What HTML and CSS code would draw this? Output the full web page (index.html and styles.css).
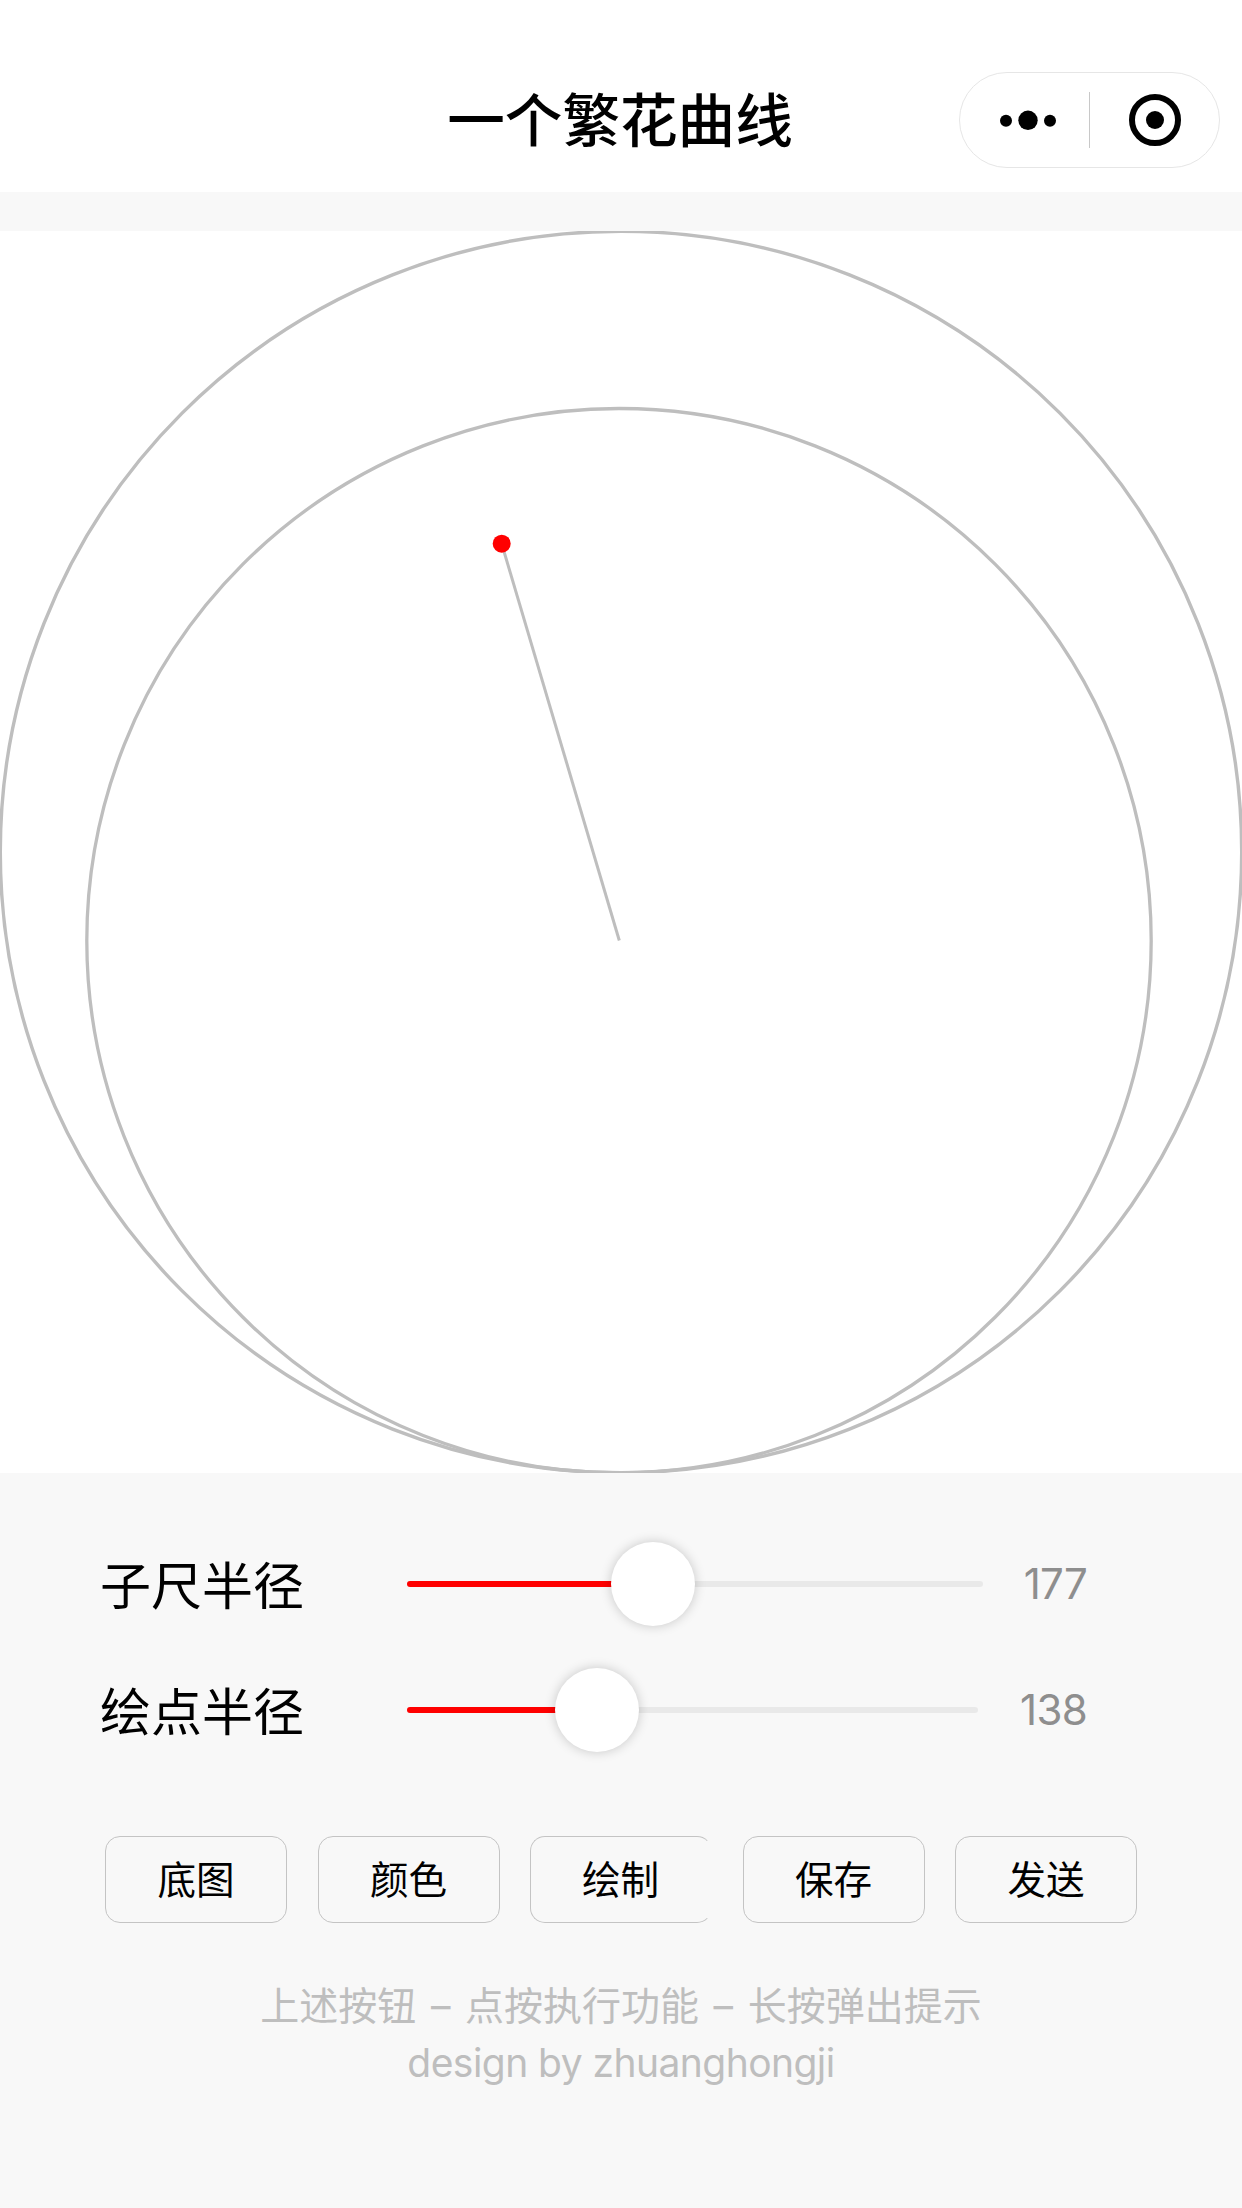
FILE: index.html
```
<!DOCTYPE html>
<html lang="zh-CN">
<head>
<meta charset="utf-8">
<title>一个繁花曲线</title>
<link rel="stylesheet" href="styles.css">
</head>
<body>
<header class="navbar">
  <h1 class="title">一个繁花曲线</h1>
  <div class="capsule">
    <svg class="capsule-icons" viewBox="0 0 261 96" aria-hidden="true">
      <rect x="0.5" y="0.5" width="260" height="95" rx="47.5" fill="#fff" stroke="#e6e6e6"/>
      <circle cx="47" cy="48.7" r="6"/>
      <circle cx="69" cy="48.3" r="9.7"/>
      <circle cx="91" cy="48.7" r="6"/>
      <rect x="130" y="20" width="1" height="56" fill="#c8c8c8"/>
      <circle cx="196" cy="48" r="23" fill="none" stroke="#000" stroke-width="6"/>
      <circle cx="196" cy="48" r="9"/>
    </svg>
  </div>
</header>
<main>
  <svg class="board" viewBox="0 0 1242 1242">
    <g fill="none" stroke="#bebebe" stroke-width="3">
      <circle cx="621" cy="621" r="620.7" stroke-width="3.4"/>
      <circle cx="619" cy="709.7" r="532.2" stroke-width="3.3"/>
      <path d="M619.3 709.5L501.7 312.7"/>
    </g>
    <circle cx="501.7" cy="312.7" r="9" fill="red"/>
  </svg>
  <section class="controls">
    <div class="row">
      <span class="label">子尺半径</span>
      <div class="slider"><span class="fill" style="width:246px"><i class="thumb"></i></span></div>
      <span class="value">177</span>
    </div>
    <div class="row">
      <span class="label">绘点半径</span>
      <div class="slider slider-short"><span class="fill" style="width:190px"><i class="thumb"></i></span></div>
      <span class="value">138</span>
    </div>
  </section>
  <nav class="buttons">
    <button class="btn">底图</button>
    <button class="btn">颜色</button>
    <button class="btn btn-open">绘制</button>
    <button class="btn">保存</button>
    <button class="btn">发送</button>
  </nav>
</main>
<footer class="footer">
  <p class="hint">上述按钮 – 点按执行功能 – 长按弹出提示</p>
  <p class="credit">design by zhuanghongji</p>
</footer>
</body>
</html>
```
FILE: styles.css
```
* { box-sizing: border-box; }
body {
  margin: 0;
  min-height: 2208px;
  background: #f8f8f8;
  color: #000;
  font-family: Inter, "Noto Sans CJK SC", sans-serif;
}
.navbar {
  height: 192px;
  padding: 48px 22px 0 20px;
  background: #fff;
  display: grid;
  grid-template-columns: 261px 1fr 261px;
  align-items: center;
}
.title {
  grid-column: 2;
  margin: 0;
  padding-top: 3px;
  font-size: 57.6px;
  line-height: 141px;
  font-weight: 500;
  text-align: center;
  white-space: nowrap;
}
.capsule { height: 96px; }
.capsule-icons { display: block; width: 261px; height: 96px; }
.board {
  display: block;
  width: 1242px;
  height: 1242px;
  margin-top: 39px;
  background: #fff;
}
.controls { padding: 48px 155px 0 100px; }
.row { height: 126px; display: flex; align-items: center; }
.label { width: 307px; padding-top: 6px; font-size: 51px; line-height: 120px; }
.slider {
  width: 576px;
  height: 6px;
  border-radius: 3px;
  background: #e9e9e9;
}
.slider-short { width: 571px; }
.fill {
  display: flex;
  align-items: center;
  justify-content: flex-end;
  height: 6px;
  border-radius: 3px;
  background: red;
}
.thumb {
  flex: none;
  width: 84px;
  height: 84px;
  margin-right: -42px;
  border-radius: 50%;
  background: #fff;
  box-shadow: 0 0 12px rgba(0, 0, 0, .2);
}
.value {
  flex: 1;
  padding-bottom: 2px;
  text-align: right;
  font-size: 42px;
  letter-spacing: -.7px;
  color: #8e8e8e;
}
.buttons {
  margin-top: 63px;
  padding: 0 105px;
  display: flex;
  justify-content: space-between;
}
.btn {
  width: 182px;
  height: 87px;
  padding: 0;
  border: 1px solid #c4c4c4;
  border-radius: 15px;
  background: transparent;
  color: #000;
  font: 38.6px/84px Inter, "Noto Sans CJK SC", sans-serif;
}
.btn-open {
  border-right-color: transparent;
  padding-right: 1px;
}
.footer {
  margin-top: 54px;
  text-align: center;
  font-size: 39px;
  line-height: 57px;
  color: #bebebe;
}
.footer p { margin: 0; }
.hint { word-spacing: 3.6px; }
.credit { letter-spacing: -.55px; }
```
